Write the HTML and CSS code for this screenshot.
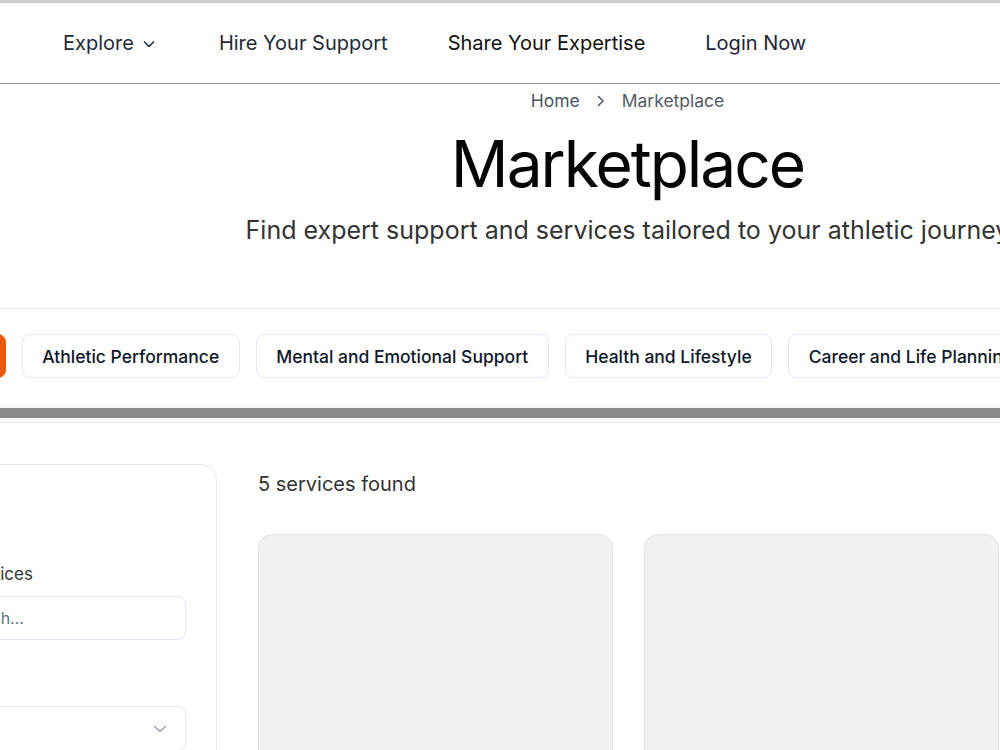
FILE: index.html
```html
<!DOCTYPE html>
<html lang="en">
<head>
<meta charset="utf-8">
<title>Marketplace</title>
<link rel="stylesheet" href="styles.css">
</head>
<body>
<header class="topbar">
  <nav class="nav">
    <a class="nav-link nav-explore" href="#">Explore
      <svg class="chev" width="14" height="14" viewBox="0 0 14 14" aria-hidden="true"><polyline points="2.5,5 7,9.5 11.5,5" fill="none" stroke="currentColor" stroke-width="1.6" stroke-linecap="round" stroke-linejoin="round"/></svg>
    </a>
    <a class="nav-link" href="#">Hire Your Support</a>
    <a class="nav-link nav-dark" href="#">Share Your Expertise</a>
    <a class="nav-link nav-login" href="#">Login Now</a>
  </nav>
</header>

<section class="hero">
  <div class="crumbs">
    <a href="#" class="crumb">Home</a>
    <svg class="crumb-sep" width="14" height="14" viewBox="0 0 14 14" aria-hidden="true"><polyline points="4.5,2.5 9,7 4.5,11.5" fill="none" stroke="currentColor" stroke-width="1.5" stroke-linecap="round" stroke-linejoin="round"/></svg>
    <span class="crumb current">Marketplace</span>
  </div>
  <h1 class="title">Marketplace</h1>
  <p class="subtitle">Find expert support and services tailored to your athletic journey</p>
</section>

<section class="cats">
  <div class="chip-row">
    <button class="chip chip-active">All</button>
    <button class="chip">Athletic Performance</button>
    <button class="chip">Mental and Emotional Support</button>
    <button class="chip">Health and Lifestyle</button>
    <button class="chip">Career and Life Planning</button>
    <button class="chip">Education and Learning</button>
  </div>
  <div class="hscroll"><div class="hscroll-thumb"></div></div>
</section>

<main class="market">
  <aside class="filters">
    <h2 class="filters-title">Filters</h2>
    <label class="field-label">Search Services</label>
    <div class="input">
      <svg class="input-icon" width="18" height="18" viewBox="0 0 18 18" aria-hidden="true"><circle cx="8" cy="8" r="5.5" fill="none" stroke="currentColor" stroke-width="1.6"/><line x1="12" y1="12" x2="16" y2="16" stroke="currentColor" stroke-width="1.6" stroke-linecap="round"/></svg>
      <span class="placeholder">Search...</span>
    </div>
    <label class="field-label field-gap">Category</label>
    <div class="select">
      <span class="select-value">All Categories</span>
      <svg class="select-chev" width="14" height="14" viewBox="0 0 14 14" aria-hidden="true"><polyline points="1.5,4.5 7,9.5 12.5,4.5" fill="none" stroke="currentColor" stroke-width="1.4" stroke-linecap="round" stroke-linejoin="round"/></svg>
    </div>
  </aside>
  <div class="results">
    <p class="count">5 services found</p>
    <div class="grid">
      <div class="card"></div>
      <div class="card"></div>
      <div class="card"></div>
    </div>
  </div>
</main>
</body>
</html>
```

FILE: styles.css
```css
html, body {
  margin: 0;
  padding: 0;
  overflow: hidden;
  background: #ffffff;
}
body {
  font-family: Inter, "Noto Sans", "Liberation Sans", sans-serif;
  color: #1f2937;
  border-top: 3px solid #cdcdcf;
  width: 1000px;
}
a { text-decoration: none; color: inherit; }

.topbar {
  height: 80px;
  border-bottom: 1px solid #8e8e8e;
  display: flex;
  align-items: center;
}
.nav {
  display: flex;
  align-items: center;
  gap: 60px;
  padding-left: 63px;
}
.nav-explore { margin-right: 3px; }
.nav-link {
  font-size: 20px;
  color: #1f2937;
  display: flex;
  align-items: center;
  gap: 8px;
  white-space: nowrap;
}
.nav-dark { color: #111111; }
.nav-login { color: #1e2433; }
.chev { color: #1f2937; margin-top: 2px; }

.hero {
  width: 1255px;
  text-align: center;
  padding-top: 5px;
  padding-bottom: 60px;
  border-bottom: 1px solid #e5e7eb;
}
.crumbs {
  display: flex;
  justify-content: center;
  align-items: center;
  gap: 14px;
  font-size: 17.5px;
  line-height: 24px;
  color: #4b5563;
}
.crumb.current { color: #555b63; }
.crumb-sep { color: #4b5563; }
.title {
  margin: 12px 0 0;
  font-size: 64px;
  line-height: 77px;
  font-weight: 400;
  color: #050505;
  letter-spacing: -2px;
}
.subtitle {
  margin: 10px 0 0;
  font-size: 25px;
  line-height: 36px;
  color: #333333;
  white-space: nowrap;
}

.cats {
  width: 1000px;
  padding-top: 25px;
}
.chip-row {
  display: flex;
  gap: 16px;
  margin-left: -56.5px;
  padding-bottom: 26px;
}
.chip {
  flex: none;
  height: 44px;
  padding: 0 19.5px;
  border: 1px solid #e2e8f0;
  border-radius: 8px;
  background: #ffffff;
  font-family: inherit;
  font-size: 17.5px;
  font-weight: 500;
  color: #0f172a;
  white-space: nowrap;
}
.chip-active {
  background: #ea580c;
  border-color: #ea580c;
  color: #ffffff;
}
.hscroll {
  height: 14px;
  background: #f7f7f7;
  display: flex;
  align-items: flex-end;
}
.hscroll-thumb {
  height: 10px;
  width: 100%;
  background: #8b8b8b;
}

.market {
  border-top: 1px solid #e5e7eb;
  margin-top: 4px;
  padding-top: 41px;
  display: flex;
  gap: 41px;
  margin-left: -129px;
  width: 1500px;
}
.filters {
  flex: none;
  width: 284px;
  height: 320px;
  border: 1px solid #e5e7eb;
  border-radius: 16px;
  padding: 30px 30px 0;
  display: flex;
  flex-direction: column;
}
.filters-title {
  margin: 0;
  font-size: 20px;
  line-height: 28px;
  font-weight: 600;
  color: #111827;
}
.field-label {
  margin-top: 39px;
  font-size: 17px;
  line-height: 24px;
  color: #333333;
}
.field-gap { margin-top: 32px; }
.input, .select {
  margin-top: 10px;
  height: 44px;
  border: 1px solid #e2e8f0;
  border-radius: 8px;
  display: flex;
  align-items: center;
  box-sizing: border-box;
}
.input { padding-left: 16px; }
.input-icon { color: #94a3b8; flex: none; }
.placeholder {
  margin-left: 20px;
  font-size: 16px;
  color: #5f7286;
}
.select {
  height: 45px;
  padding: 0 18px 0 16px;
  justify-content: space-between;
}
.select-value { font-size: 16px; color: #333; visibility: hidden; }
.select-chev { color: #9ca3af; }

.results { flex: none; }
.count {
  margin: 6px 0 0;
  font-size: 20px;
  line-height: 28px;
  color: #333333;
}
.grid {
  margin-top: 36px;
  display: flex;
  gap: 31px;
}
.card {
  width: 353px;
  height: 320px;
  background: #f1f1f1;
  border: 1px solid #e3e3e3;
  border-radius: 14px;
}
```
